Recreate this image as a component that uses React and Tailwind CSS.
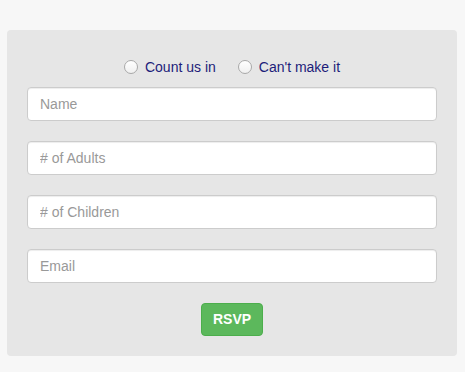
import React from 'react';

const fields = ['Name', '# of Adults', '# of Children', 'Email'];

const Radio = ({ label }) => (
  <label className="flex items-center gap-[7px]">
    <span className="h-[14px] w-[14px] rounded-full border border-[#a9a9a9] bg-gradient-to-b from-white to-[#f0f0f0]" />
    <span className="text-[14px] text-[#1d1d7a]">{label}</span>
  </label>
);

export default function App() {
  return (
    <div
      className="min-h-[372px] bg-[#f7f7f7] pt-[30px]"
      style={{ fontFamily: '"Liberation Sans", Arial, sans-serif' }}
    >
      <div className="mx-[7px] w-[450px] rounded-[4px] bg-[#e6e6e6] px-[20px] pt-[27px] pb-[20px]">
        {/* attendance */}
        <div className="mb-[10px] flex h-[20px] items-center justify-center gap-[22px]">
          <Radio label="Count us in" />
          <Radio label="Can't make it" />
        </div>

        {fields.map((f) => (
          <input
            key={f}
            placeholder={f}
            className="mb-[20px] block h-[34px] w-full rounded-[4px] border border-[#cccccc] bg-white px-[12px] text-[14px] text-[#555] shadow-[inset_0_1px_1px_rgba(0,0,0,0.075)] outline-none placeholder:text-[#999]"
          />
        ))}

        <div className="flex justify-center">
          <button className="h-[33px] w-[62px] rounded-[4px] border border-[#4cae4c] bg-[#5cb85c] text-[14px] font-bold text-white">
            RSVP
          </button>
        </div>
      </div>
    </div>
  );
}
